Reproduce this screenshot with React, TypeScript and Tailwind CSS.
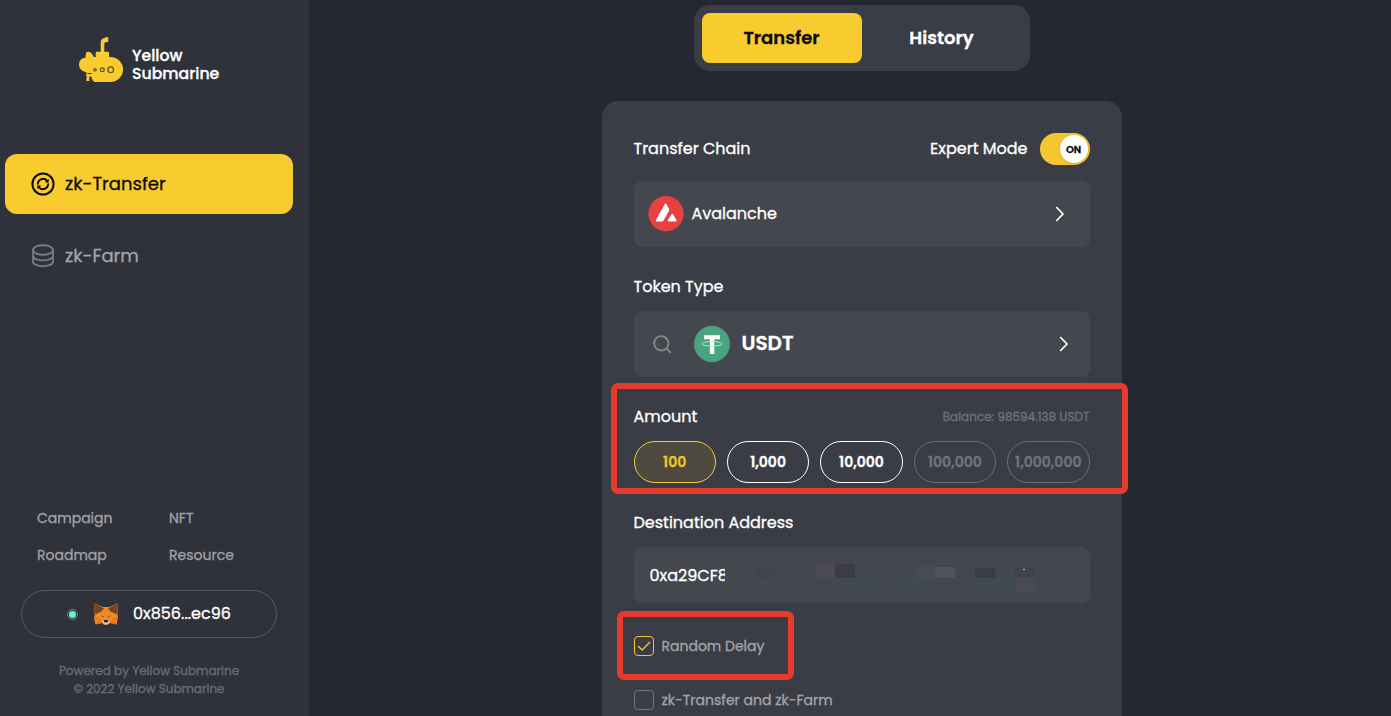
import type { ReactNode } from "react";

function Logo() {
  return (
    <svg width="46" height="46" viewBox="0 0 46 46" className="shrink-0">
      <path
        fill="#f8cb2e"
        d="M21.700 14.700V5.500Q21.700 1.500 25.500 1.300L26.200 .300H29.300V5H27.200Q25.300 5 25.300 7V14.700H29Q30 14.700 30 15.700V20H31.600A12.400 12.400 0 0 1 31.600 44.900H16Q13.200 44.500 12.300 39.500H10.300V44H7.300V41L8.300 40.200L7.300 39.500V35H6.500Q0 33.500 0 27.500Q0 21.500 6.700 20.500V17Q6.700 14.700 9.200 14.700Q12 14.700 13 17L15 20H16.700V15.700Q16.700 14.700 17.700 14.700Z"
      />
      <path d="M8.500 36.500H12.500" stroke="#30323b" strokeWidth="1" />
      <g fill="none" stroke="#574e20" strokeWidth="1.200">
        <circle cx="16" cy="32.700" r="1.200" />
        <circle cx="23.300" cy="32.700" r="1.900" />
        <circle cx="31.700" cy="32.700" r="2.800" />
      </g>
    </svg>
  );
}

function TransferIcon() {
  return (
    <svg width="24" height="24" viewBox="0 0 24 24" fill="none" stroke="#0b0b0b" strokeWidth="2">
      <circle cx="12" cy="12" r="10.600" />
      <path d="M6.900 12.600A5.200 5.200 0 0 1 16 8.700M17.100 11.400A5.200 5.200 0 0 1 8 15.300" strokeWidth="1.900" />
      <path d="M17.600 6.800V10.600H13.800ZM6.400 17.200V13.400H10.200Z" fill="#0b0b0b" stroke="none" />
    </svg>
  );
}

function FarmIcon() {
  return (
    <svg width="24" height="24" viewBox="0 0 24 24" fill="none" stroke="#787980" strokeWidth="1.900">
      <ellipse cx="12" cy="6" rx="10" ry="4.800" />
      <path d="M2 6V17.500C2 20.300 6.500 22.300 12 22.300S22 20.300 22 17.500V6M2 11.800C2 14.300 6.500 16.400 12 16.400S22 14.300 22 11.800" />
    </svg>
  );
}

function Fox() {
  return (
    <svg width="24" height="22" viewBox="0 0 24 22">
      <path fill="#f08a28" d="M0 0L8.500 4H15.500L24 0L23.500 12L24 15L22.500 21.500L16 20L14 21.500H10L8 20L1.500 21.500L0 15L.8 12Z" />
      <path fill="#7a431c" d="M0 0L10 5.500L7.500 8.500L1.500 11.500L.6 7.500ZM24 0L14 5.500L16.500 8.500L22.500 11.500L23.400 7.500Z" />
      <path fill="#e0741f" d="M1.500 21.500L5.500 16L8 20ZM22.500 21.500L18.500 16L16 20ZM0 15L6 15L1.500 18ZM24 15H18L22.500 18Z" />
      <path fill="#4d3524" d="M7 12.200L9.800 13.200L9.300 14.300ZM17 12.200L14.200 13.200L14.700 14.300Z" />
      <path fill="#d8c7b8" d="M8 18.500L9.800 17.300H14.200L16 18.500L14 21.500H10Z" />
      <path fill="#2d2622" d="M9.800 17H14.200L14 19.300H10Z" />
    </svg>
  );
}

function Avax() {
  return (
    <svg width="36" height="36" viewBox="0 0 36 36">
      <circle cx="18" cy="17.700" r="17.600" fill="#e84142" />
      <path
        fill="#fff"
        d="M8.700 25.400Q7.200 25.400 8 23.900L16.600 8.400Q17.600 6.700 18.600 8.400L20.900 12.700Q21.500 13.900 20.900 15L15.700 24.200Q15 25.400 13.600 25.400ZM20.700 25.400Q19.300 25.400 20 24.100L23.400 18.400Q24.300 17 25.200 18.400L28.400 24.100Q29 25.400 27.700 25.400Z"
      />
    </svg>
  );
}

function Tether() {
  return (
    <svg width="36" height="36" viewBox="0 0 36 36">
      <circle cx="18" cy="18" r="18" fill="#4aa57e" />
      <path fill="#fff" d="M10.200 9.200H26V13.300H20.300V28H15.900V13.300H10.200Z" />
      <ellipse cx="18" cy="17.800" rx="10" ry="2.300" fill="none" stroke="#a5ead0" strokeWidth="1" />
    </svg>
  );
}

function Chevron() {
  return (
    <svg width="10" height="16" viewBox="0 0 10 16" fill="none" stroke="#fff" strokeWidth="1.700">
      <path d="M1.200 1L8 8L1.200 15" />
    </svg>
  );
}

function T({ className = "", children }: { className?: string; children: ReactNode }) {
  return <span className={`whitespace-nowrap ${className}`}>{children}</span>;
}

const amounts = [
  { label: "100", box: "border-[#f8cb2e] bg-[#4e4a3f] text-[#f0c530]" },
  { label: "1,000", box: "border-white text-white" },
  { label: "10,000", box: "border-white text-white" },
  { label: "100,000", box: "border-[#6c6e75] text-[#71737a]" },
  { label: "1,000,000", box: "border-[#6c6e75] text-[#71737a]" },
];

export default function App() {
  return (
    <div className="flex h-[716px] w-[1391px] overflow-hidden bg-[#252731] font-['Poppins','Inter',sans-serif] text-base font-normal text-white [-webkit-text-stroke:0.3px]">
      <aside className="flex w-[309px] shrink-0 flex-col bg-[#30323b]">
        <div className="flex h-[154px] items-start gap-[7px] pl-[79px] pt-[37px]">
          <Logo />
          <div className="flex flex-col items-start pt-[10px] text-[15.700px] font-medium leading-[17.500px]">
            <T>Yellow</T>
            <T>Submarine</T>
          </div>
        </div>
        <nav className="flex flex-col gap-3 pl-[5px] text-lg">
          <a className="flex h-[60px] w-[288px] items-center gap-[10px] rounded-xl bg-[#f8cb2e] pl-[26px] text-[#0b0b0b]">
            <TransferIcon />
            <T>zk-Transfer</T>
          </a>
          <a className="flex h-[60px] w-[288px] items-center gap-[10px] pl-[26px] text-[#a4a5a9]">
            <FarmIcon />
            <T>zk-Farm</T>
          </a>
        </nav>
        <div className="mt-auto grid grid-cols-[132px_1fr] justify-items-start gap-y-[17px] pl-[37px] text-sm leading-5 text-[#a1a2a7]">
          <T>Campaign</T>
          <T>NFT</T>
          <T>Roadmap</T>
          <T>Resource</T>
        </div>
        <div className="ml-[21px] mt-[25px] flex h-12 w-64 items-center rounded-full border border-[#5a5c64] pl-[45px]">
          <span className="flex size-[11px] items-center justify-center rounded-full border border-[#4a9c8f]">
            <span className="size-[7px] rounded-full bg-[#70f0d4]" />
          </span>
          <span className="ml-4 mr-[15px]"><Fox /></span>
          <T>0x856...ec96</T>
        </div>
        <div className="flex flex-col items-center pb-[18px] pr-[11px] pt-6 text-xs leading-[18px] text-[#6b6d75]">
          <T>Powered by Yellow Submarine</T>
          <T>© 2022 Yellow Submarine</T>
        </div>
      </aside>

      <main className="flex flex-1 flex-col items-center pl-[23px] pt-[5px]">
        <div className="flex h-[66px] w-[336px] shrink-0 rounded-2xl bg-[#3b3d46] p-2 text-lg font-semibold">
          <button className="h-[50px] w-40 rounded-lg bg-[#f8cb2e] text-[#0b0b0b]"><T>Transfer</T></button>
          <button className="h-[50px] w-40"><T>History</T></button>
        </div>

        <section className="relative mt-[30px] h-[615px] w-[520px] shrink-0 rounded-t-2xl bg-[#3b3d46] px-8 pt-8">
          <div className="flex h-8 items-center">
            <T>Transfer Chain</T>
            <T className="ml-auto">Expert Mode</T>
            <span className="ml-3 flex h-8 w-[50px] items-center justify-end rounded-full bg-[#f4c630] pr-0.5">
              <span className="flex size-7 items-center justify-center rounded-full bg-white text-[10px] font-semibold text-black shadow">ON</span>
            </span>
          </div>
          <div className="mt-4 flex h-[66px] items-center rounded-lg bg-[#45474f] pl-[14px] pr-[25px]">
            <Avax />
            <T className="ml-2">Avalanche</T>
            <span className="ml-auto"><Chevron /></span>
          </div>
          <div className="mt-6 flex h-8 items-center"><T>Token Type</T></div>
          <div className="mt-2 flex h-[66px] items-center rounded-lg bg-[#45474f] pl-[19px] pr-[21px]">
            <svg width="19" height="19" viewBox="0 0 19 19" fill="none" stroke="#85868c" strokeWidth="1.900">
              <circle cx="8.300" cy="8.300" r="7.200" />
              <path d="M13.500 13.500L17.800 17.800" />
            </svg>
            <span className="ml-[22px]"><Tether /></span>
            <T className="ml-3 pb-0.5 text-xl font-semibold">USDT</T>
            <span className="ml-auto"><Chevron /></span>
          </div>
          <div className="mt-6 flex h-8 items-center justify-between">
            <T>Amount</T>
            <T className="text-xs text-[#71737a]">Balance: 98594.138 USDT</T>
          </div>
          <div className="mt-2 grid grid-cols-5 gap-[11px]">
            {amounts.map((a) => (
              <button key={a.label} className={`flex h-[42px] items-center justify-center rounded-full border text-sm font-semibold ${a.box}`}>
                <T>{a.label}</T>
              </button>
            ))}
          </div>
          <div className="mt-6 flex h-8 items-center"><T>Destination Address</T></div>
          <div className="mt-2 flex h-14 items-center rounded-lg bg-[#45474f] pl-4">
            <span className="w-[75px] overflow-hidden pt-0.5"><T>0xa29CF8</T></span>
            <svg width="340" height="36" viewBox="725 557 340 36">
              <path fill="#424c53" opacity=".7" d="M733 578H795V588H733ZM835 578H875V592H835ZM895 578H935V592H895ZM975 578H1014V595H975Z" />
              <path fill="#42454d" d="M755 564H775V578H755Z" />
              <path fill="#4a4a53" d="M815 564H835V578H815ZM915 566H935V578H915ZM1015 578H1035V597H1015Z" />
              <path fill="#3b3c46" d="M835 564H855V578H835ZM975 568H995V578H975Z" />
              <path fill="#50525b" d="M935 567H955V578H935Z" />
              <path fill="#3f424a" d="M1015 568H1035V577H1015Z" />
              <path fill="#b9bbbf" d="M1023 569H1025V570H1023Z" />
            </svg>
          </div>
          <div className="mt-[33px] flex h-5 items-center gap-2 text-sm text-[#a4a5aa]">
            <span className="flex size-5 items-center justify-center rounded border border-[#f0c530]">
              <svg width="14" height="11" viewBox="0 0 14 11" fill="none" stroke="#f0c530" strokeWidth="1.400"><path d="M1 5L5.200 9L13 1" /></svg>
            </span>
            <T>Random Delay</T>
          </div>
          <div className="mt-[34px] flex h-5 items-center gap-2 text-sm text-[#a4a5aa]">
            <span className="size-5 rounded border border-[#73757c]" />
            <T>zk-Transfer and zk-Farm</T>
          </div>
          <div className="absolute left-[9px] top-[282px] h-[111px] w-[517px] rounded-[7px] border-[6px] border-[#e63c30]" />
          <div className="absolute left-[15px] top-[510px] h-[69px] w-[177px] rounded-[7px] border-[6px] border-[#e63c30]" />
        </section>
      </main>
    </div>
  );
}
